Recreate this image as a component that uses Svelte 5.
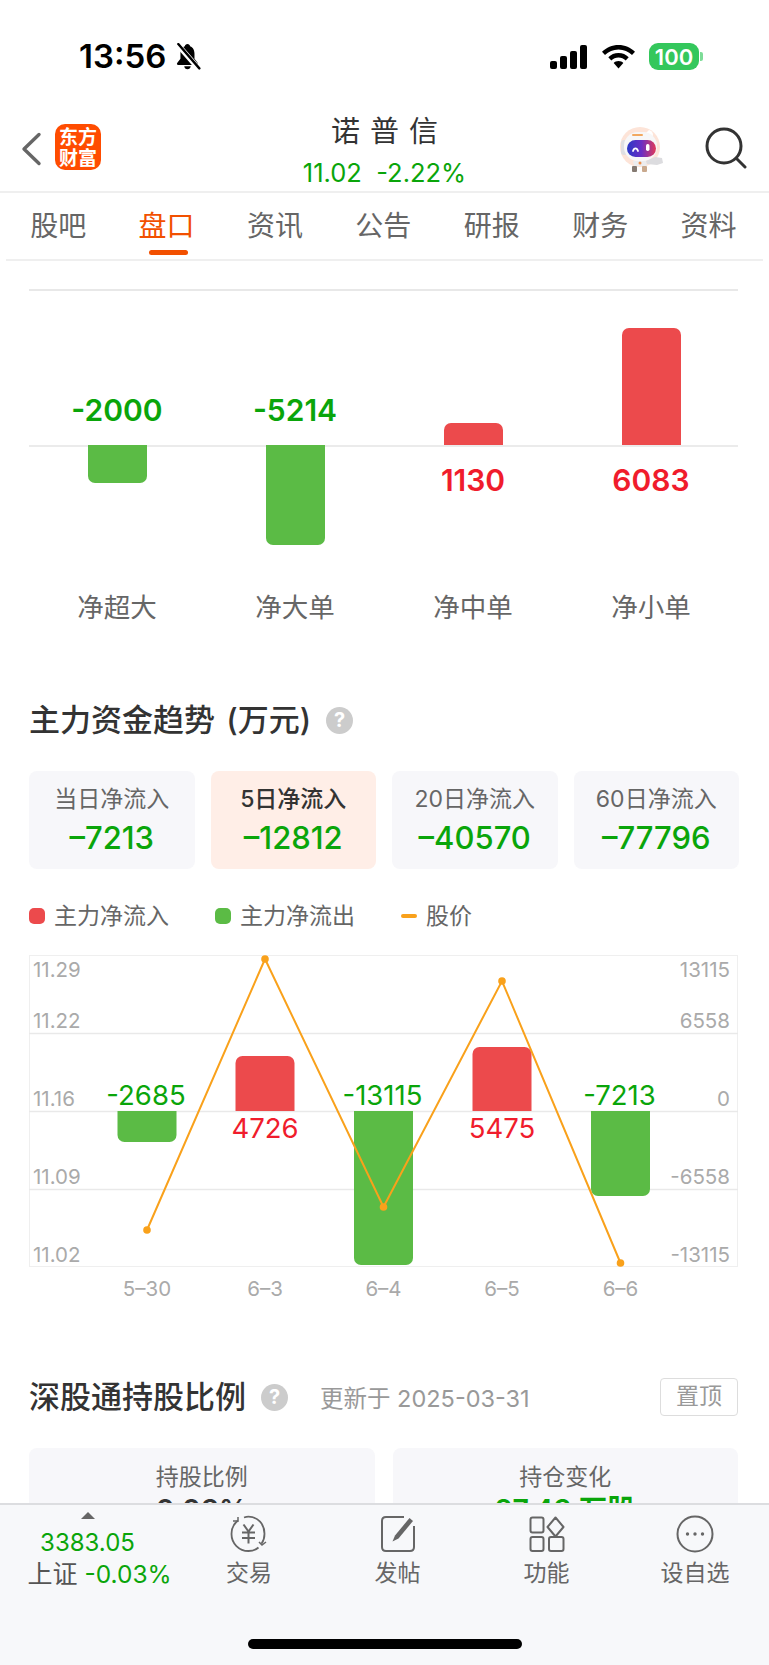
<script>
	const flows = [
		{ label: '净超大', value: -2000, h: 38 },
		{ label: '净大单', value: -5214, h: 100 },
		{ label: '净中单', value: 1130, h: 22 },
		{ label: '净小单', value: 6083, h: 117 }
	];
	const trendCards = [
		{ label: '当日净流入', value: '–7213' },
		{ label: '5日净流入', value: '–12812', active: true },
		{ label: '20日净流入', value: '–40570' },
		{ label: '60日净流入', value: '–77796' }
	];
	const tabs = ['股吧', '盘口', '资讯', '公告', '研报', '财务', '资料'];

	// chart coordinates are relative to the svg box (709 x 312)
	const zero = 156;
	const days = [
		{ x: 118, date: '5–30', value: -2685, top: 156, h: 31, py: 275 },
		{ x: 236, date: '6–3', value: 4726, top: 101, h: 55, py: 4 },
		{ x: 354.5, date: '6–4', value: -13115, top: 156, h: 154, py: 252 },
		{ x: 473, date: '6–5', value: 5475, top: 92, h: 64, py: 26 },
		{ x: 591.5, date: '6–6', value: -7213, top: 156, h: 85, py: 308 }
	];
	const linePoints = days.map((d) => d.x + ',' + d.py).join(' ');
	const leftAxis = [['11.29', 14], ['11.22', 65], ['11.16', 143], ['11.09', 221], ['11.02', 299]];
	const rightAxis = [['13115', 14], ['6558', 65], ['0', 143], ['-6558', 221], ['-13115', 299]];
</script>

<div class="page">
	<div class="status">
		<div class="status-left">
			<span class="time">13:56</span>
			<svg width="26" height="27" viewBox="2 1 23 25">
				<path d="M13 2c-1.400 0-2.200 1-2.400 2C7.600 5 6.500 8 6.500 11v4.500L3.500 19.500c-.6.9-.2 1.800 1 1.800h17c1.200 0 1.600-.9 1-1.800l-3-4V11c0-3-1.100-6-4.100-7-.2-1-1-2-2.400-2z" fill="#000"/>
				<path d="M10 22.500h6c-.2 1.700-1.400 2.700-3 2.700s-2.800-1-3-2.700z" fill="#000"/>
				<path d="M3 1.500 24 25.500" stroke="#fff" stroke-width="5"/>
				<path d="M4.500 2 24 24.500" stroke="#000" stroke-width="2.200" stroke-linecap="round"/>
			</svg>
		</div>
		<div class="status-right">
			<svg width="38" height="24" viewBox="0 0 38 24" fill="#000">
				<rect x="0" y="16" width="7" height="8" rx="2"/>
				<rect x="10" y="11" width="7" height="13" rx="2"/>
				<rect x="20" y="6" width="7" height="18" rx="2"/>
				<rect x="30" y="0" width="7" height="24" rx="2"/>
			</svg>
			<svg width="33" height="24" viewBox="0 0 33 24">
				<path d="M16.500 0C10 0 4.500 2.500 0 6.800l3 3.200C6.500 6.500 11.200 4.400 16.500 4.400S26.500 6.500 30 10l3-3.200C28.500 2.500 23 0 16.500 0z"/>
				<path d="M16.500 8c-4 0-7.500 1.600-10.200 4.200l3 3.200c2-1.800 4.400-3 7.200-3s5.200 1.200 7.200 3l3-3.200C24 9.600 20.500 8 16.500 8z"/>
				<path d="M16.500 16c-2 0-3.500.7-4.800 1.900l4.800 5.600 4.800-5.600C20 16.700 18.500 16 16.500 16z"/>
			</svg>
			<div class="battery"><span>100</span></div>
			<div class="battery-tip"></div>
		</div>
	</div>

	<div class="nav">
		<svg class="back" width="22" height="34" viewBox="0 0 22 34">
			<path d="M19 2.500 4 17l15 14.500" fill="none" stroke="#666" stroke-width="3.400" stroke-linecap="round" stroke-linejoin="round"/>
		</svg>
		<div class="logo">东方<br />财富</div>
		<div class="nav-title">
			<div class="stock">诺普信</div>
			<div class="quote">11.02&nbsp;&nbsp;-2.22%</div>
		</div>
		<svg class="robot" width="46" height="46" viewBox="0 0 46 46">
			<defs>
				<linearGradient id="visor" x1="0" x2="1">
					<stop offset="0" stop-color="#2a38c6"/>
					<stop offset="0.5" stop-color="#6a2fc4"/>
					<stop offset="1" stop-color="#e23a58"/>
				</linearGradient>
			</defs>
			<circle cx="22" cy="20" r="20" fill="#fde4d8"/>
			<path d="M31 3c3.500 1 5 4 3 8l-7-4z" fill="#fff"/>
			<rect x="3" y="13" width="6" height="15" rx="3" fill="#dfdfe2"/>
			<rect x="6" y="5" width="33" height="29" rx="14" fill="#f7f7f8"/>
			<rect x="14" y="7" width="11" height="2" rx="1" fill="#f2a860"/>
			<rect x="9" y="13" width="29" height="17" rx="8.500" fill="url(#visor)"/>
			<path d="M15 24c1.200-3.500 3.800-3.500 5 0" fill="none" stroke="#fff" stroke-width="1.800" stroke-linecap="round"/>
			<rect x="28" y="17" width="3.500" height="7" rx="1.700" fill="#fff"/>
			<path d="M15 34h13l1 5H16z" fill="#ececee"/>
			<path d="M28 34l9-4 7 1 1 5-6 2-10-1z" fill="#dcdcdf"/>
			<rect x="14" y="39" width="5" height="6" rx="1" fill="#857a72"/>
			<rect x="24" y="39" width="5" height="6" rx="1" fill="#c9a98e"/>
			<circle cx="22" cy="36" r="1.500" fill="#ef8f4a"/>
		</svg>
		<svg class="search" width="42" height="42" viewBox="0 0 42 42">
			<circle cx="19" cy="19" r="17" fill="none" stroke="#333" stroke-width="3"/>
			<path d="M32 32l8 8" stroke="#333" stroke-width="3" stroke-linecap="round"/>
		</svg>
	</div>

	<div class="tabs">
		{#each tabs as tab, i}
			<div class="tab" class:on={i === 1}>{tab}</div>
		{/each}
	</div>

	<section class="flow">
		<div class="flow-chart">
			{#each flows as f}
				<div class="flow-col">
					<div class="half up">
						{#if f.value > 0}
							<div class="bar red" style="height:{f.h}px"></div>
						{:else}
							<span class="flow-val green">{f.value}</span>
						{/if}
					</div>
					<div class="half down">
						{#if f.value < 0}
							<div class="bar grn" style="height:{f.h}px"></div>
						{:else}
							<span class="flow-val red-t">{f.value}</span>
						{/if}
					</div>
				</div>
			{/each}
		</div>
		<div class="flow-labels">
			{#each flows as f}
				<span>{f.label}</span>
			{/each}
		</div>
	</section>

	<section class="trend">
		<h2>主力资金趋势 (万元)<i class="help">?</i></h2>
		<div class="trend-cards">
			{#each trendCards as c}
				<div class="trend-card" class:active={c.active}>
					<div class="tc-label">{c.label}</div>
					<div class="tc-value">{c.value}</div>
				</div>
			{/each}
		</div>
		<div class="legend">
			<span class="lg"><i class="dot r"></i>主力净流入</span>
			<span class="lg"><i class="dot g"></i>主力净流出</span>
			<span class="lg"><i class="dash"></i>股价</span>
		</div>
		<svg class="combo" width="709" height="346" viewBox="0 0 709 346">
			<rect x="0.500" y="0.500" width="708" height="311" fill="none" stroke="#efefef"/>
			<path d="M0 78.500h709M0 156.500h709M0 234.500h709" stroke="#e9e9e9" stroke-width="1.500"/>
			{#each leftAxis as [t, y]}
				<text class="axis" x="4" y={y + 8}>{t}</text>
			{/each}
			{#each rightAxis as [t, y]}
				<text class="axis" x="701" y={y + 8} text-anchor="end">{t}</text>
			{/each}
			{#each days as d}
				{#if d.value < 0}
					<path d="M{d.x - 29.5} {d.top}h59v{d.h - 7}a7 7 0 0 1-7 7h-45a7 7 0 0 1-7-7z" fill="#5bbb45"/>
					<text class="bar-val" x={d.x - 1} y={zero - 6} text-anchor="middle" fill="#0aa50a">{d.value}</text>
				{:else}
					<path d="M{d.x - 29.5} {zero}v{-d.h + 7}a7 7 0 0 1 7-7h45a7 7 0 0 1 7 7v{d.h - 7}z" fill="#ec4a4c"/>
					<text class="bar-val" x={d.x} y={zero + 27} text-anchor="middle" fill="#f01c2c">{d.value}</text>
				{/if}
				<text class="axis" x={d.x} y="341" text-anchor="middle">{d.date}</text>
			{/each}
			<polyline points={linePoints} fill="none" stroke="#f9a11b" stroke-width="2"/>
			{#each days as d}
				<circle cx={d.x} cy={d.py} r="3.800" fill="#f9a11b"/>
			{/each}
		</svg>
	</section>

	<section class="hold">
		<div class="hold-head">
			<h2>深股通持股比例<i class="help">?</i></h2>
			<span class="updated">更新于 2025-03-31</span>
			<span class="pin">置顶</span>
		</div>
		<div class="hold-cards">
			<div class="hold-card">
				<div class="hc-label">持股比例</div>
				<div class="hc-value">0.03%</div>
			</div>
			<div class="hold-card">
				<div class="hc-label">持仓变化</div>
				<div class="hc-value green">27.43 万股</div>
			</div>
		</div>
	</section>

	<div class="footer">
		<div class="index">
			<i class="tri"></i>
			<div class="idx-num">3383.05</div>
			<div class="idx-name">上证 <b>-0.03%</b></div>
		</div>
		<div class="act">
			<svg width="44" height="38" viewBox="0 0 44 38" fill="none" stroke="#666" stroke-width="1.800">
				<path d="M11 5.500C6.500 9 4.500 13 4.500 19c0 9.500 7.500 17 17 17 4 0 7-1 10-3.500"/>
				<path d="M6 6l5 0 0-4" stroke-width="1.500"/>
				<path d="M17 2.500c1.500-.5 3-.8 4.500-.8 9.500 0 16 7.500 16 17 0 4-.8 7-3 10"/>
				<path d="M32 27l3 3 4-3" stroke-width="1.500"/>
				<path d="M16.500 9.500l5 7 5-7M15 17.500h13M15 23h13M21.500 16.500v12" stroke-width="2"/>
			</svg>
			<span>交易</span>
		</div>
		<div class="act">
			<svg width="36" height="38" viewBox="0 0 36 38" fill="none" stroke="#666" stroke-width="2">
				<path d="M24 2H6C3.500 2 2 3.500 2 6v26c0 2.500 1.500 4 4 4h24c2.500 0 4-1.500 4-4V11"/>
				<path d="M12.500 26.500l2.500-6L29.500 3l3.500 3-14.500 17.500z" fill="#666" stroke="none"/>
			</svg>
			<span>发帖</span>
		</div>
		<div class="act">
			<svg width="36" height="36" viewBox="0 0 36 36" fill="none" stroke="#666" stroke-width="2">
				<rect x="1.500" y="1.500" width="13" height="15" rx="2"/>
				<path d="M26.500 1.500l8 9.500-8 9.500-8-9.500z" stroke-linejoin="round"/>
				<rect x="1.500" y="21" width="13" height="14" rx="2"/>
				<rect x="20" y="21" width="14.500" height="14" rx="2"/>
			</svg>
			<span>功能</span>
		</div>
		<div class="act">
			<svg width="38" height="38" viewBox="0 0 38 38" fill="none" stroke="#666" stroke-width="2">
				<circle cx="19" cy="19" r="17.500"/>
				<circle cx="11.500" cy="19" r="1.700" fill="#666" stroke="none"/>
				<circle cx="19" cy="19" r="1.700" fill="#666" stroke="none"/>
				<circle cx="26.500" cy="19" r="1.700" fill="#666" stroke="none"/>
			</svg>
			<span>设自选</span>
		</div>
		<div class="home"></div>
	</div>
</div>

<style>
	:global(body) {
		margin: 0;
		background: #fff;
	}
	.page {
		position: relative;
		width: 769px;
		height: 1665px;
		overflow: hidden;
		background: #fff;
		font-family: "Inter", "Noto Sans CJK SC", sans-serif;
		color: #333;
	}
	.green { color: #0aa50a; }
	.red-t { color: #f01c2c; }

	/* status bar */
	.status {
		height: 112px;
		box-sizing: border-box;
		padding: 43px 66px 0 79px;
		display: flex;
		justify-content: space-between;
		align-items: flex-start;
	}
	.status-left {
		display: flex;
		align-items: center;
		gap: 9px;
		height: 27px;
	}
	.time {
		font-size: 33px;
		font-weight: 600;
		color: #000;
		line-height: 27px;
	}
	.status-right {
		display: flex;
		align-items: center;
		height: 27px;
		gap: 14px;
	}
	.battery {
		width: 50px;
		height: 27px;
		border-radius: 9px;
		background: #34c75c;
		color: #fff;
		display: flex;
		align-items: center;
		justify-content: center;
		font-size: 22px;
		font-weight: 600;
	}
	.battery-tip {
		width: 3px;
		height: 9px;
		margin-left: -13px;
		border-radius: 0 2px 2px 0;
		background: #7ddc97;
	}

	/* nav */
	.nav {
		position: relative;
		height: 67px;
		border-bottom: 2px solid #efefef;
		display: flex;
		align-items: flex-start;
		padding: 12px 0 0 20px;
	}
	.back {
		margin-top: 8px;
	}
	.logo {
		margin-left: 13px;
		width: 46px;
		height: 46px;
		border-radius: 10px;
		background: #ff4c00;
		color: #fff;
		font-size: 19px;
		font-weight: 700;
		line-height: 21px;
		text-align: center;
		padding-top: 3px;
		box-sizing: border-box;
	}
	.nav-title {
		position: absolute;
		left: 0;
		right: 0;
		top: 0;
		text-align: center;
	}
	.stock {
		font-size: 29px;
		letter-spacing: 10px;
		padding-left: 10px;
		line-height: 40px;
		color: #333;
	}
	.quote {
		font-size: 25.500px;
		color: #0aa50a;
		line-height: 30px;
		margin-top: 6px;
	}
	.robot {
		margin-left: auto;
		margin-top: 3px;
	}
	.search {
		margin: 3px 22px 0 41px;
	}

	/* tabs */
	.tabs {
		height: 66px;
		margin: 0 6px;
		border-bottom: 2px solid #efefef;
		display: grid;
		grid-template-columns: repeat(7, 108.400px);
	}
	.tab {
		position: relative;
		box-sizing: border-box;
		padding-right: 4px;
		text-align: center;
		font-size: 28px;
		line-height: 66px;
		color: #666;
	}
	.tab.on {
		color: #f25000;
	}
	.tab.on::after {
		content: "";
		position: absolute;
		left: 35px;
		bottom: 4px;
		width: 39px;
		height: 5px;
		border-radius: 3px;
		background: #f25000;
	}

	/* net flow bars */
	.flow {
		margin: 28px 31px 0 29px;
		border-top: 2px solid #e8e8e8;
	}
	.flow-chart {
		position: relative;
		display: grid;
		grid-template-columns: repeat(4, 178px);
		margin-left: -1px;
		height: 294px;
	}
	.flow-chart::before {
		content: "";
		position: absolute;
		left: 1px;
		width: 709px;
		top: 154px;
		height: 2px;
		background: #ebebeb;
	}
	.flow-col {
		display: flex;
		flex-direction: column;
		align-items: center;
	}
	.half {
		position: relative;
		width: 100%;
		display: flex;
		flex-direction: column;
		align-items: center;
	}
	.half.up {
		height: 154px;
		justify-content: flex-end;
	}
	.bar {
		width: 59px;
	}
	.bar.red {
		background: #ec4a4c;
		border-radius: 7px 7px 0 0;
	}
	.bar.grn {
		background: #5bbb45;
		border-radius: 0 0 7px 7px;
	}
	.flow-val {
		font-size: 30px;
		font-weight: 600;
		line-height: 36px;
	}
	.half.up .flow-val {
		margin-bottom: 17px;
	}
	.half.down .flow-val {
		margin-top: 17px;
	}
	.flow-labels {
		display: grid;
		grid-template-columns: repeat(4, 178px);
		margin-left: -1px;
		margin-top: 4px;
		font-size: 26.500px;
		line-height: 36px;
		color: #666;
		text-align: center;
	}

	/* trend */
	.trend {
		margin: 0 31px 0 29px;
		padding-top: 73px;
	}
	h2 {
		margin: 0;
		font-size: 31px;
		font-weight: 500;
		line-height: 44px;
		word-spacing: 3px;
		color: #333;
		display: flex;
		align-items: center;
	}
	.help {
		display: inline-block;
		width: 27px;
		height: 27px;
		border-radius: 50%;
		background: #ccc;
		color: #fff;
		font-size: 20px;
		font-weight: 700;
		font-style: normal;
		text-align: center;
		line-height: 27px;
		margin-left: 15px;
	}
	.trend-cards {
		display: grid;
		grid-template-columns: repeat(4, 165.500px);
		gap: 16px;
		margin-top: 29px;
	}
	.trend-card {
		height: 98px;
		border-radius: 8px;
		background: #f7f7fa;
		text-align: center;
		color: #666;
		box-sizing: border-box;
		padding-top: 12px;
	}
	.trend-card.active {
		background: #ffeee7;
		color: #333;
	}
	.tc-label {
		font-size: 23px;
		line-height: 32px;
	}
	.active .tc-label {
		font-weight: 500;
	}
	.tc-value {
		font-size: 31px;
		font-weight: 500;
		line-height: 40px;
		margin-top: 3px;
		color: #0aa50a;
	}
	.legend {
		display: flex;
		margin-top: 30px;
		font-size: 23px;
		line-height: 34px;
		color: #666;
	}
	.lg {
		display: flex;
		align-items: center;
		gap: 9px;
		margin-right: 46px;
	}
	.dot {
		width: 16px;
		height: 16px;
		border-radius: 5px;
	}
	.dot.r { background: #ec4a4c; }
	.dot.g { background: #5bbb45; }
	.dash {
		width: 16px;
		height: 4px;
		border-radius: 2px;
		background: #f9a11b;
	}
	.combo {
		display: block;
		margin-top: 22px;
	}
	.axis {
		font-size: 20.500px;
		fill: #aaa;
	}
	.bar-val {
		font-size: 27.500px;
	}

	/* shenzhen connect */
	.hold {
		margin: 0 31px 0 29px;
		padding-top: 74px;
	}
	.hold-head {
		display: flex;
		align-items: center;
		height: 44px;
	}
	.updated {
		margin-left: 32px;
		font-size: 23.500px;
		color: #999;
	}
	.pin {
		margin-left: auto;
		width: 78px;
		height: 38px;
		box-sizing: border-box;
		border: 1.500px solid #ddd;
		border-radius: 4px;
		font-size: 23px;
		line-height: 35px;
		text-align: center;
		color: #999;
	}
	.hold-cards {
		display: grid;
		grid-template-columns: 345.500px 345.500px;
		gap: 18px;
		margin-top: 29px;
	}
	.hold-card {
		height: 120px;
		border-radius: 8px;
		background: #f7f7fa;
		text-align: center;
		padding-top: 13px;
		box-sizing: border-box;
	}
	.hc-label {
		font-size: 23px;
		line-height: 32px;
		color: #666;
	}
	.hc-value {
		font-size: 28.500px;
		font-weight: 600;
		line-height: 40px;
		margin-top: -3px;
	}

	/* bottom bar sits over the scrolled content */
	.footer {
		position: absolute;
		left: 0;
		right: 0;
		bottom: 0;
		height: 162px;
		box-sizing: border-box;
		background: #f7f8fa;
		border-top: 2px solid #dcdde0;
		display: grid;
		grid-template-columns: 175px 148px 149px 149px 148px;
	}
	.index {
		position: relative;
		text-align: center;
		padding-top: 23px;
	}
	.tri {
		position: absolute;
		left: 81px;
		top: 7px;
		width: 0;
		height: 0;
		border: 7px solid transparent;
		border-top: 0;
		border-bottom: 7px solid #666;
	}
	.idx-num {
		font-size: 24px;
		line-height: 30px;
		color: #0aa50a;
	}
	.idx-name {
		font-size: 25px;
		line-height: 34px;
		color: #555;
		margin-top: -1px;
		padding-left: 24px;
		white-space: nowrap;
	}
	.idx-name b {
		font-weight: 400;
		color: #0aa50a;
		font-size: 24.500px;
	}
	.act {
		display: flex;
		flex-direction: column;
		align-items: center;
		padding-top: 10px;
		font-size: 23px;
		line-height: 32px;
		color: #666;
	}
	.act svg {
		height: 38px;
	}
	.act span {
		margin-top: 4px;
	}
	.home {
		position: absolute;
		left: 248px;
		bottom: 16px;
		width: 274px;
		height: 10px;
		border-radius: 5px;
		background: #000;
	}
</style>
